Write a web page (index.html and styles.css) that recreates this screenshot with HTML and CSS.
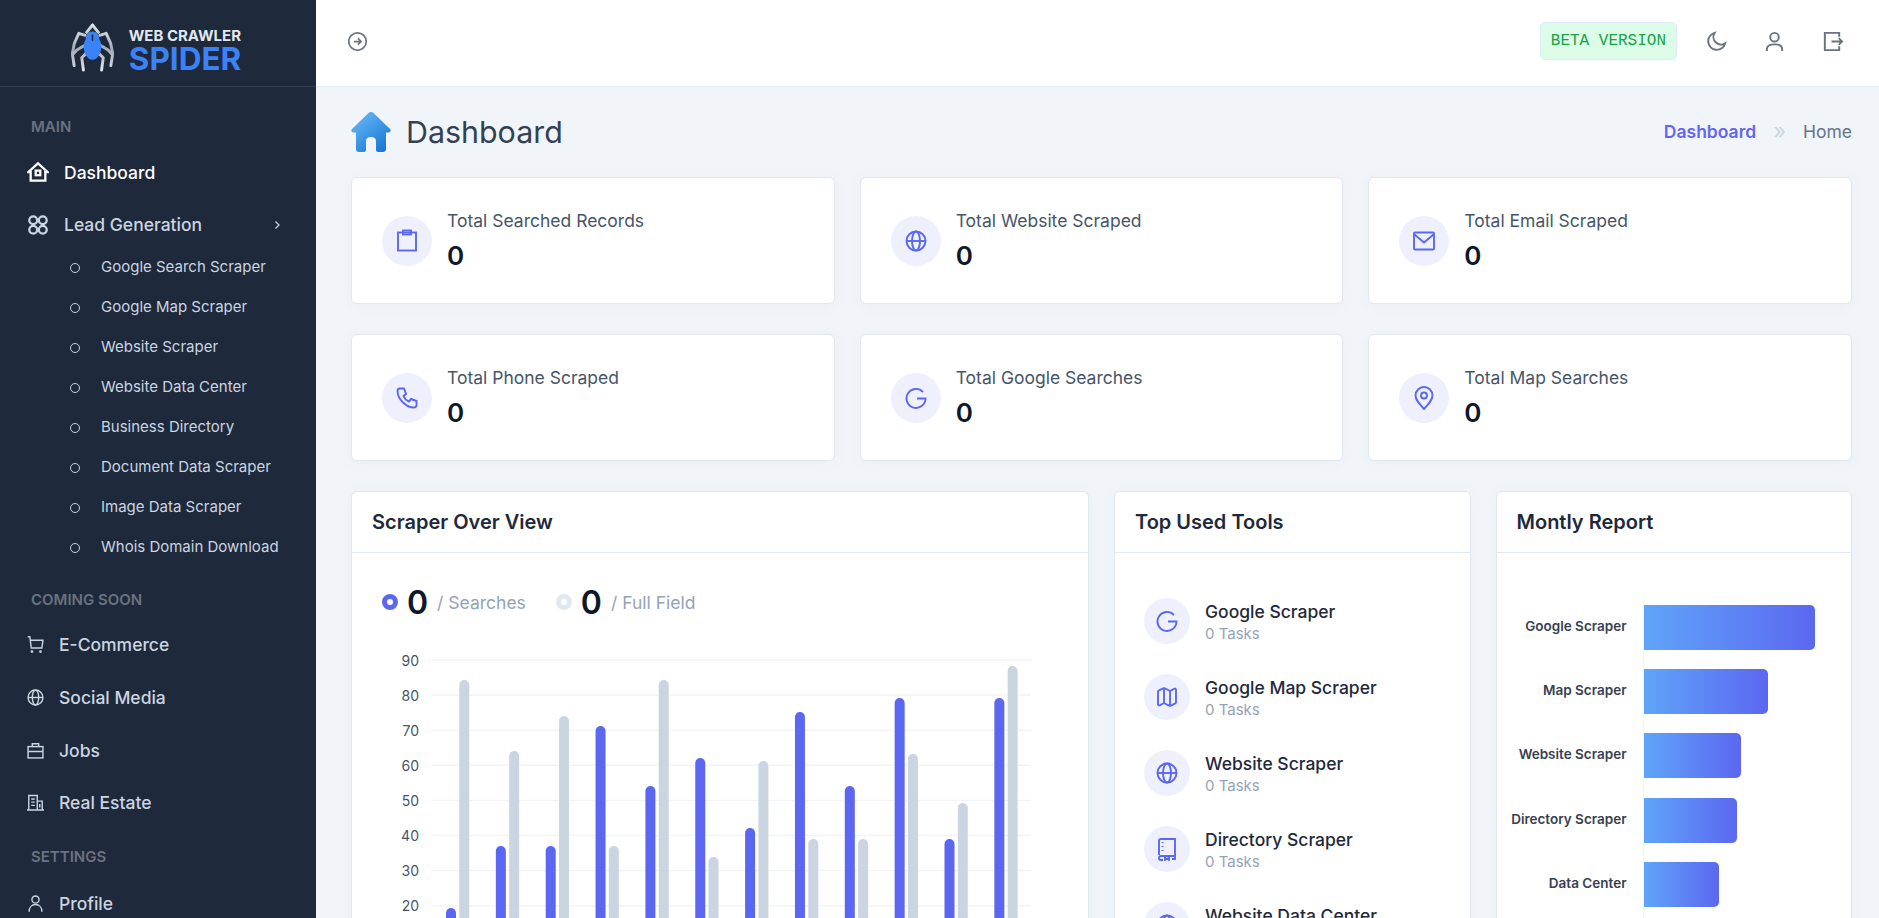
FILE: index.html
```html
<!DOCTYPE html>
<html lang="en">
<head>
  <meta charset="UTF-8" />
  <meta name="viewport" content="width=device-width, initial-scale=1.0"/>
  <title>Web Crawler Spider - Dashboard</title>
  <link rel="stylesheet" href="styles.css">
</head>
<body>
<div class="app">

  <aside class="sidebar">
    <div class="brand">
      <svg class="brand-mark" viewBox="0 0 44 49" fill="none" stroke-linecap="round" stroke-linejoin="round">
        <defs>
          <linearGradient id="legGrad" gradientUnits="userSpaceOnUse" x1="0" y1="0" x2="14" y2="49">
            <stop offset="0" stop-color="#f1f5f9"/>
            <stop offset="0.500" stop-color="#a3abb6"/>
            <stop offset="1" stop-color="#e5e7eb"/>
          </linearGradient>
          <g id="spiderLegs" stroke="url(#legGrad)" stroke-width="3">
            <path d="M16 9 22 1.500"/>
            <path d="M14.500 12 8 10 3.500 20 1.500 30"/>
            <path d="M14.500 22 6 27 1.500 32l1.700 11"/>
            <path d="M16 30l-5 5 1.700 12.500"/>
          </g>
        </defs>
        <use href="#spiderLegs"/>
        <use href="#spiderLegs" transform="matrix(-1 0 0 1 44 0)"/>
        <path fill="#3b82f6" d="M22 8c-4.500 0-6.500 3-7 8-1 2-2 4-2 7 0 8 4 14 9 14s9-6 9-14c0-3-1-5-2-7-.5-5-2.500-8-7-8z"/>
        <path d="M22 12v5" stroke="#1e293b" stroke-width="1.600"/>
      </svg>
      <div class="brand-text">
        <span class="brand-top">WEB CRAWLER</span>
        <span class="brand-name">SPIDER</span>
      </div>
    </div>

    <nav class="side-nav">
      <div class="nav-label">MAIN</div>
      <a class="nav-item active">
        <svg class="nav-icon big" viewBox="0 0 24 24"><path d="M12 2.500 22.500 12H20v9.500H4V12H1.500z"/><rect x="9.500" y="10.500" width="5" height="5"/></svg>
        <span>Dashboard</span>
      </a>
      <a class="nav-item">
        <svg class="nav-icon big" viewBox="0 0 24 24"><circle cx="6.800" cy="6.800" r="4.300"/><circle cx="17.200" cy="6.800" r="4.300"/><circle cx="6.800" cy="17.200" r="4.300"/><circle cx="17.200" cy="17.200" r="4.300"/></svg>
        <span>Lead Generation</span>
        <svg class="nav-chevron" viewBox="0 0 24 24"><path d="m9 5 7 7-7 7"/></svg>
      </a>
      <ul class="sub-nav">
        <li>Google Search Scraper</li>
        <li>Google Map Scraper</li>
        <li>Website Scraper</li>
        <li>Website Data Center</li>
        <li>Business Directory</li>
        <li>Document Data Scraper</li>
        <li>Image Data Scraper</li>
        <li>Whois Domain Download</li>
      </ul>

      <div class="nav-label">COMING SOON</div>
      <a class="nav-item">
        <svg class="nav-icon" viewBox="0 0 24 24"><path d="M1 1h3l2 16h15l1.500-11H4.500"/><circle cx="7" cy="22" r="1"/><circle cx="19" cy="22" r="1"/></svg>
        <span>E-Commerce</span>
      </a>
      <a class="nav-item">
        <svg class="nav-icon" viewBox="0 0 24 24"><circle cx="12" cy="12" r="10.500"/><ellipse cx="12" cy="12" rx="4.500" ry="10.500"/><path d="M1.500 12h21"/></svg>
        <span>Social Media</span>
      </a>
      <a class="nav-item">
        <svg class="nav-icon" viewBox="0 0 24 24"><rect x="1.500" y="6.500" width="21" height="16"/><path d="M7.500 6.500v-4h9v4M1.500 13.500h21"/></svg>
        <span>Jobs</span>
      </a>
      <a class="nav-item">
        <svg class="nav-icon" viewBox="0 0 24 24"><path d="M0 22.500h24M2.500 22.500V2h12v20.500M14.500 10h7v12.500M6 7h5M6 11.500h5M6 16h5M18 14v5"/></svg>
        <span>Real Estate</span>
      </a>

      <div class="nav-label settings">SETTINGS</div>
      <a class="nav-item">
        <svg class="nav-icon" viewBox="0 0 24 24"><circle cx="12" cy="6.500" r="5"/><path d="M3 23.500c0-6.500 4-10 9-10s9 3.500 9 10"/></svg>
        <span>Profile</span>
      </a>
    </nav>
  </aside>

  <div class="main">
    <header class="topbar">
      <svg class="top-icon small" viewBox="0 0 24 24"><circle cx="12" cy="12" r="10"/><path d="M8 12h8M12.500 8.500 16 12l-3.500 3.500"/></svg>
      <div class="top-right">
        <span class="beta">BETA VERSION</span>
        <div class="top-icons">
          <svg class="top-icon" viewBox="0 0 24 24"><path d="M10 3a9 9 0 1 0 11 11A8 8 0 0 1 10 3z"/></svg>
          <svg class="top-icon" viewBox="0 0 24 24"><circle cx="12" cy="7.500" r="4.500"/><path d="M4 22v-2c0-3 3-5 8-5s8 2 8 5v2"/></svg>
          <svg class="top-icon" viewBox="0 0 24 24"><path d="M19 7V3H4v18h15v-4M11 12h11M18.500 8.500 22 12l-3.500 3.500"/></svg>
        </div>
      </div>
    </header>

    <main class="content">
      <div class="page-head">
        <div class="page-title">
          <svg class="page-icon" viewBox="0 0 40 40">
            <defs>
              <linearGradient id="houseGrad" x1="0.150" y1="0.100" x2="0.850" y2="0.950">
                <stop offset="0" stop-color="#64b5f6"/>
                <stop offset="1" stop-color="#1976d2"/>
              </linearGradient>
            </defs>
            <path fill="url(#houseGrad)" d="M20 0c1 0 1.800.400 2.500 1L39 17c1.500 1.500.500 3.500-1.500 3.500H35V37c0 1.700-1.300 3-3 3h-5c-1 0-2-1-2-2v-9c0-2.500-2-4-5-4s-5 1.500-5 4v9c0 1-1 2-2 2H8c-1.700 0-3-1.300-3-3V20.500H2.500C.5 20.500-.5 18.500 1 17L17.500 1c.7-.6 1.500-1 2.500-1z"/>
          </svg>
          <h1>Dashboard</h1>
        </div>
        <div class="crumbs">
          <a>Dashboard</a>
          <span class="crumb-sep">»</span>
          <span>Home</span>
        </div>
      </div>

      <section class="stats">
        <div class="card stat">
          <div class="round-icon big"><svg viewBox="0 0 24 24"><rect x="3" y="3.500" width="18" height="18"/><rect x="8" y="1.500" width="8" height="4"/></svg></div>
          <div class="stat-text"><div class="stat-name">Total Searched Records</div><div class="stat-value">0</div></div>
        </div>
        <div class="card stat">
          <div class="round-icon big"><svg viewBox="0 0 24 24"><circle cx="12" cy="12" r="9.500"/><ellipse cx="12" cy="12" rx="4" ry="9.500"/><path d="M2.500 12h19"/></svg></div>
          <div class="stat-text"><div class="stat-name">Total Website Scraped</div><div class="stat-value">0</div></div>
        </div>
        <div class="card stat">
          <div class="round-icon big"><svg viewBox="0 0 24 24"><rect x="2" y="3.500" width="20" height="17" rx="1"/><path d="m2.500 5.500 9.500 8 9.500-8"/></svg></div>
          <div class="stat-text"><div class="stat-name">Total Email Scraped</div><div class="stat-value">0</div></div>
        </div>
        <div class="card stat">
          <div class="round-icon big"><svg viewBox="0 0 24 24"><path d="M5 2.500h4l2 5.500-2.500 2c1 2.500 3 4.500 5.500 5.500l2-2.500 5.500 2v4c0 1.500-1 2.500-2.500 2.500C11 21.500 2.500 13 2.500 5c0-1.500 1-2.500 2.500-2.500z"/></svg></div>
          <div class="stat-text"><div class="stat-name">Total Phone Scraped</div><div class="stat-value">0</div></div>
        </div>
        <div class="card stat">
          <div class="round-icon big"><svg viewBox="0 0 24 24"><path d="M19 6a9.500 9.500 0 1 0 2.500 6.500H13"/></svg></div>
          <div class="stat-text"><div class="stat-name">Total Google Searches</div><div class="stat-value">0</div></div>
        </div>
        <div class="card stat">
          <div class="round-icon big"><svg viewBox="0 0 24 24"><path d="M12 23C6.500 17 3.500 13.500 3.500 9.500a8.500 8.500 0 0 1 17 0c0 4-3 7.500-8.500 13.500z"/><circle cx="12" cy="9.500" r="3"/></svg></div>
          <div class="stat-text"><div class="stat-name">Total Map Searches</div><div class="stat-value">0</div></div>
        </div>
      </section>

      <section class="panels">
        <div class="card panel">
          <div class="panel-head">Scraper Over View</div>
          <div class="legend">
            <span class="legend-dot blue"></span><b>0</b><span class="legend-text">/ Searches</span>
            <span class="legend-dot grey"></span><b>0</b><span class="legend-text">/ Full Field</span>
          </div>
          <svg class="overview-chart" viewBox="0 0 735 350">
            <g class="grid-lines">
              <path d="M79 20H678M79 55.100H678M79 90.200H678M79 125.300H678M79 160.400H678M79 195.500H678M79 230.600H678M79 265.700H678M79 300.800H678M79 335.900H678"/>
            </g>
            <g class="axis-text">
              <text x="66" y="26">90</text>
              <text x="66" y="61">80</text>
              <text x="66" y="96">70</text>
              <text x="66" y="131">60</text>
              <text x="66" y="166">50</text>
              <text x="66" y="201">40</text>
              <text x="66" y="236">30</text>
              <text x="66" y="271">20</text>
              <text x="66" y="306">10</text>
              <text x="66" y="341">0</text>
            </g>
            <g class="bars-blue">
              <rect x="93" y="268" width="10" height="90" rx="5"/>
              <rect x="142.850" y="206" width="10" height="150" rx="5"/>
              <rect x="192.700" y="206" width="10" height="150" rx="5"/>
              <rect x="242.550" y="86" width="10" height="270" rx="5"/>
              <rect x="292.400" y="146" width="10" height="210" rx="5"/>
              <rect x="342.250" y="118" width="10" height="240" rx="5"/>
              <rect x="392.100" y="188" width="10" height="170" rx="5"/>
              <rect x="441.950" y="72" width="10" height="290" rx="5"/>
              <rect x="491.800" y="146" width="10" height="210" rx="5"/>
              <rect x="541.650" y="58" width="10" height="300" rx="5"/>
              <rect x="591.500" y="199" width="10" height="160" rx="5"/>
              <rect x="641.350" y="58" width="10" height="300" rx="5"/>
            </g>
            <g class="bars-grey">
              <rect x="106.300" y="40" width="10" height="310" rx="5"/>
              <rect x="156.150" y="111" width="10" height="240" rx="5"/>
              <rect x="206" y="76" width="10" height="280" rx="5"/>
              <rect x="255.850" y="206" width="10" height="150" rx="5"/>
              <rect x="305.700" y="40" width="10" height="310" rx="5"/>
              <rect x="355.550" y="217" width="10" height="140" rx="5"/>
              <rect x="405.400" y="121" width="10" height="230" rx="5"/>
              <rect x="455.250" y="199" width="10" height="160" rx="5"/>
              <rect x="505.100" y="199" width="10" height="160" rx="5"/>
              <rect x="554.950" y="114" width="10" height="240" rx="5"/>
              <rect x="604.800" y="163" width="10" height="190" rx="5"/>
              <rect x="654.650" y="26" width="10" height="330" rx="5"/>
            </g>
          </svg>
        </div>

        <div class="card panel">
          <div class="panel-head">Top Used Tools</div>
          <ul class="tools">
            <li>
              <div class="round-icon"><svg viewBox="0 0 24 24"><path d="M19 6a9.500 9.500 0 1 0 2.500 6.500H13"/></svg></div>
              <div class="tool-text"><div class="tool-name">Google Scraper</div><div class="tool-count">0 Tasks</div></div>
            </li>
            <li>
              <div class="round-icon"><svg viewBox="0 0 24 24"><path d="M14.100 5.500a2 2 0 0 0 1.800 0l3.600-1.800a1 1 0 0 1 1.500.900v12.800a1 1 0 0 1-.600.900l-4.500 2.300a2 2 0 0 1-1.800 0l-4.200-2.100a2 2 0 0 0-1.800 0l-3.600 1.800a1 1 0 0 1-1.500-.900V6.600a1 1 0 0 1 .600-.900l4.500-2.300a2 2 0 0 1 1.800 0zM15 5.800v15M9 3.200v15"/></svg></div>
              <div class="tool-text"><div class="tool-name">Google Map Scraper</div><div class="tool-count">0 Tasks</div></div>
            </li>
            <li>
              <div class="round-icon"><svg viewBox="0 0 24 24"><circle cx="12" cy="12" r="9.500"/><ellipse cx="12" cy="12" rx="4" ry="9.500"/><path d="M2.500 12h19"/></svg></div>
              <div class="tool-text"><div class="tool-name">Website Scraper</div><div class="tool-count">0 Tasks</div></div>
            </li>
            <li>
              <div class="round-icon"><svg viewBox="0 0 24 24"><path d="M4 18V4a2 2 0 0 1 2-2h14v17H6a2 2 0 0 0 0 4h2M20 19v3h-3M7.500 5v1M7.500 9v1M7.500 13v1M10 19v4l2-1.500 2 1.500v-4"/></svg></div>
              <div class="tool-text"><div class="tool-name">Directory Scraper</div><div class="tool-count">0 Tasks</div></div>
            </li>
            <li>
              <div class="round-icon"><svg viewBox="0 0 24 24"><circle cx="12" cy="12" r="9.500"/><ellipse cx="12" cy="12" rx="4" ry="9.500"/><path d="M2.500 12h19"/></svg></div>
              <div class="tool-text"><div class="tool-name">Website Data Center</div><div class="tool-count">0 Tasks</div></div>
            </li>
          </ul>
        </div>

        <div class="card panel">
          <div class="panel-head">Montly Report</div>
          <div class="report">
            <div class="report-row"><span class="report-label">Google Scraper</span><div class="report-bar" style="width: 172px"></div></div>
            <div class="report-row"><span class="report-label">Map Scraper</span><div class="report-bar" style="width: 125px"></div></div>
            <div class="report-row"><span class="report-label">Website Scraper</span><div class="report-bar" style="width: 98px"></div></div>
            <div class="report-row"><span class="report-label">Directory Scraper</span><div class="report-bar" style="width: 94px"></div></div>
            <div class="report-row"><span class="report-label">Data Center</span><div class="report-bar" style="width: 76px"></div></div>
          </div>
        </div>
      </section>
    </main>
  </div>

</div>
</body>
</html>
```

FILE: styles.css
```css
* {
  box-sizing: border-box;
}
body {
  margin: 0;
  background-color: #f1f5f9;
  color: #0f172a;
  font-family: 'Inter', 'Liberation Sans', sans-serif;
}
ul {
  list-style: none;
  margin: 0;
  padding: 0;
}
.app {
  display: flex;
  height: 100vh;
  overflow: hidden;
}

/* sidebar */
.sidebar {
  width: 316px;
  flex-shrink: 0;
  background-color: #1e293b;
  overflow: hidden;
}
.brand {
  height: 87px;
  display: flex;
  align-items: center;
  justify-content: center;
  gap: 15px;
  border-bottom: 1px solid #334155;
  padding: 8px 4px 0 0;
}
.brand-mark {
  width: 43px;
  height: 49px;
}
.brand-text {
  display: flex;
  flex-direction: column;
  font-weight: 700;
  margin-top: 4px;
}
.brand-top {
  color: #e2e8f0;
  font-size: 15px;
  line-height: 19px;
}
.brand-name {
  color: #3b82f6;
  font-size: 31.500px;
  line-height: 28px;
}
.side-nav {
  padding: 30px 0 0 27px;
}
.nav-label {
  color: #6b7280;
  font-size: 15px;
  font-weight: 600;
  line-height: 20px;
  margin: 23px 0 13px 4px;
}
.nav-label:first-child {
  margin-top: 0;
}
.nav-label.settings {
  margin-top: 22px;
  margin-bottom: 15px;
}
.nav-item {
  height: 44px;
  margin-bottom: 8.7px;
  display: flex;
  align-items: center;
  gap: 15px;
  color: #cbd5e1;
  font-size: 17.500px;
  font-weight: 500;
}
.nav-item.active {
  color: #fff;
}
.nav-icon {
  width: 17px;
  height: 17px;
  fill: none;
  stroke: currentColor;
  stroke-width: 2;
}
.nav-icon.big {
  width: 22px;
  height: 22px;
  stroke-width: 2.500;
}
.nav-chevron {
  width: 12px;
  height: 12px;
  fill: none;
  stroke: currentColor;
  stroke-width: 2.500;
  margin-left: 54px;
}
.sub-nav {
  margin-top: -8.7px;
  padding-left: 74px;
}
.sub-nav li {
  height: 40px;
  line-height: 40px;
  color: #cbd5e1;
  font-size: 15px;
  position: relative;
}
.sub-nav li::before {
  content: "";
  position: absolute;
  left: -31px;
  top: 16.500px;
  width: 8px;
  height: 8px;
  border: 1px solid #cbd5e1;
  border-radius: 50%;
}

/* top bar */
.main {
  flex: 1;
  min-width: 0;
  display: flex;
  flex-direction: column;
}
.topbar {
  height: 87px;
  flex-shrink: 0;
  display: flex;
  align-items: center;
  justify-content: space-between;
  background-color: #fff;
  border-bottom: 1px solid #e2e8f0;
  padding: 0 35px 4px 31px;
}
.top-right {
  display: flex;
  align-items: center;
  gap: 28px;
}
.top-icons {
  display: flex;
  align-items: center;
  gap: 35px;
}
.top-icon {
  width: 23px;
  height: 23px;
  fill: none;
  stroke: #6b7280;
  stroke-width: 2;
  display: block;
}
.top-icon.small {
  width: 21px;
  height: 21px;
}
.beta {
  font-family: 'Liberation Mono', monospace;
  font-size: 16px;
  color: #16a34a;
  background-color: #dcfce7;
  border: 1px solid #dbeafe;
  border-radius: 5px;
  padding: 9px 10px;
  line-height: 18px;
}

/* content */
.content {
  flex: 1;
  padding: 25px 27px 0 35px;
  overflow: hidden;
}
.page-head {
  height: 40px;
  display: flex;
  align-items: center;
  justify-content: space-between;
  margin-bottom: 25px;
}
.page-title {
  display: flex;
  align-items: center;
  gap: 15px;
}
.page-icon {
  width: 40px;
  height: 40px;
}
.page-title h1 {
  margin: 0;
  font-size: 30.400px;
  font-weight: 400;
  color: #334155;
}
.crumbs {
  display: flex;
  align-items: center;
  gap: 17px;
  font-size: 17.500px;
  color: #64748b;
  padding-bottom: 2px;
}
.crumbs a {
  color: #6366f1;
  font-weight: 600;
}
.crumb-sep {
  color: #cbd5e1;
  font-size: 22px;
  line-height: 22px;
}
.card {
  background-color: #fff;
  border: 1px solid #e2e8f0;
  border-radius: 6px;
  box-shadow: 0 2px 12px rgba(148, 163, 184, 0.08);
}
.stats {
  display: grid;
  grid-template-columns: repeat(3, 1fr);
  column-gap: 25px;
  row-gap: 30px;
}
.stat {
  height: 127px;
  display: flex;
  align-items: center;
  gap: 15px;
  padding: 0 29px 0 30px;
}
.stat-text {
  padding-top: 1px;
}
.round-icon {
  width: 46px;
  height: 46px;
  flex-shrink: 0;
  border-radius: 50%;
  background-color: #eef0fe;
  display: flex;
  align-items: center;
  justify-content: center;
}
.round-icon.big {
  width: 50px;
  height: 50px;
}
.round-icon svg {
  width: 24px;
  height: 24px;
  fill: none;
  stroke: #5b67f0;
  stroke-width: 1.900;
}
.stat-name {
  font-size: 17.500px;
  color: #475569;
  line-height: 24px;
}
.stat-value {
  font-size: 26px;
  font-weight: 600;
  color: #0f172a;
  line-height: 34px;
  margin-top: 6px;
}
.panels {
  display: grid;
  grid-template-columns: 738px 1fr 1fr;
  column-gap: 25px;
  margin-top: 30px;
}
.panel {
  min-height: 600px;
}
.panel-head {
  height: 61px;
  line-height: 60px;
  padding-left: 20px;
  border-bottom: 1px solid #e2e8f0;
  font-size: 20px;
  font-weight: 600;
  color: #1e293b;
}

/* overview chart */
.legend {
  display: flex;
  align-items: center;
  height: 40px;
  margin: 29px 0 0 30px;
}
.legend b {
  font-size: 32px;
  font-weight: 600;
  margin-left: 9px;
}
.legend-text {
  font-size: 17.500px;
  color: #94a3b8;
  margin-left: 9px;
  margin-right: 30px;
}
.legend-dot {
  width: 16px;
  height: 16px;
  border-radius: 50%;
  border: 5px solid #5b67f0;
  background-color: #fff;
}
.legend-dot.grey {
  border-color: #e2e8f0;
}
.overview-chart {
  display: block;
  width: 735px;
  height: 350px;
  margin: 18px 0 0 1px;
}
.grid-lines path {
  stroke: #f1f5f9;
  stroke-width: 1.500;
  fill: none;
}
.axis-text text {
  font-size: 14px;
  fill: #475569;
  text-anchor: end;
}
.bars-blue rect {
  fill: #5b67f0;
}
.bars-grey rect {
  fill: #cbd5e1;
}

/* top used tools */
.tools {
  padding: 45px 0 0 29px;
}
.tools li {
  display: flex;
  align-items: center;
  gap: 15px;
  height: 46px;
  margin-bottom: 30px;
}
.tool-text {
  padding-top: 2px;
}
.tool-name {
  font-size: 17.500px;
  font-weight: 500;
  color: #1e293b;
  line-height: 22px;
}
.tool-count {
  font-size: 15px;
  color: #94a3b8;
  line-height: 20px;
  margin-top: 1px;
}

/* monthly report */
.report {
  position: relative;
  margin-top: 44px;
  padding-top: 8px;
}
.report::before {
  content: "";
  position: absolute;
  left: 146px;
  top: 0;
  bottom: -40px;
  width: 1px;
  background-color: #f1f5f9;
}
.report-row {
  display: flex;
  height: 64.200px;
}
.report-label {
  width: 130px;
  flex-shrink: 0;
  text-align: right;
  font-size: 13.500px;
  font-weight: 600;
  color: #374151;
  line-height: 42px;
  margin-right: 16px;
}
.report-bar {
  height: 45px;
  border-radius: 0 5px 5px 0;
  background: linear-gradient(90deg, #60a5fa, #5b67f0);
}
```
